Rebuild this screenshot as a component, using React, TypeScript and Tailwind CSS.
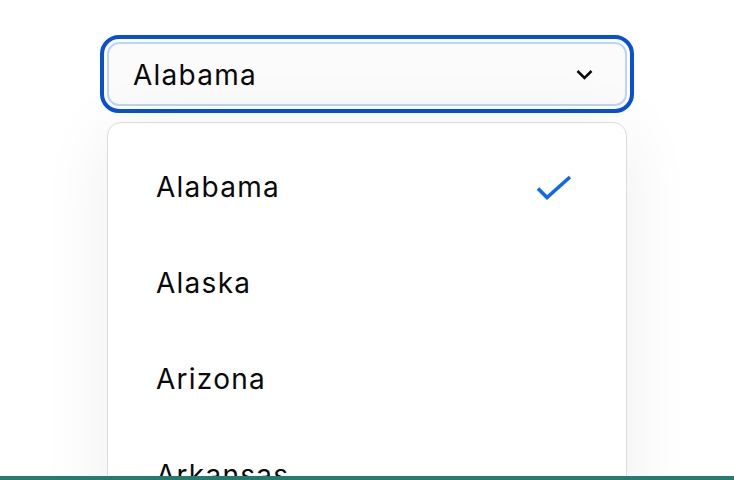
import React from "react";

const states = ["Alabama", "Alaska", "Arizona", "Arkansas"];

const App = () => {
  const [selected] = React.useState("Alabama");

  return (
    <div
      className="flex h-screen w-full flex-col overflow-hidden bg-white"
      style={{ fontFamily: "Inter, 'Noto Sans', sans-serif" }}
    >
      <div className="flex flex-1 flex-col items-center overflow-hidden pt-[42px]">
        <button className="flex h-16 w-[520px] shrink-0 items-center justify-between rounded-xl border-2 border-[#bcd4fa] bg-[#fbfbfc] pl-[24px] pr-[32px] outline-4 outline-offset-3 outline-[#0651d6]">
          <span className="pt-[2px] text-[28px] tracking-[0.045em] text-[#0a0a0a]">
            {selected}
          </span>
          <svg width="17" height="11" viewBox="0 0 17 11" fill="none">
            <path
              d="M1.5 2 L8.5 9 L15.5 2"
              stroke="#0a0a0a"
              strokeWidth="2.5"
            />
          </svg>
        </button>

        <div className="mt-4 w-[520px] shrink-0 rounded-[14px] border border-[#dadae2] bg-white py-4 shadow-[0_10px_70px_rgba(20,20,60,0.07)]">
          {states.map((s) => (
            <div
              key={s}
              className="flex h-24 items-center justify-between pl-12 pr-[54px]"
            >
              <span className="text-[28px] tracking-[0.045em] text-[#0a0a0a]">
                {s}
              </span>
              {s === selected && (
                <svg width="36" height="25" viewBox="0 0 36 25" fill="none">
                  <path
                    d="M2 13.5 L11 22.5 L34 2"
                    stroke="#0f68f2"
                    strokeWidth="3.6"
                  />
                </svg>
              )}
            </div>
          ))}
        </div>
      </div>
      <div className="h-1 w-full shrink-0 bg-[#277a6e]" />
    </div>
  );
};

export default App;
